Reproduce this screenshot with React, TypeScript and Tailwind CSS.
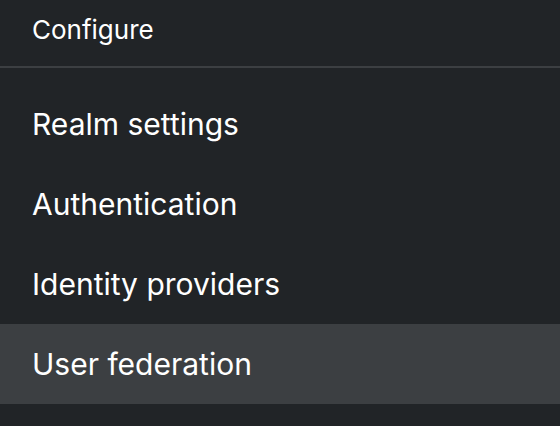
const items = ['Realm settings', 'Authentication', 'Identity providers', 'User federation']

export default function App() {
  const active = 'User federation'
  return (
    <div className="h-[426px] w-[560px] overflow-hidden bg-[#212427] text-white" style={{ fontFamily: 'Inter, "Noto Sans", sans-serif' }}>
      <div className="flex h-[66px] items-center px-8 pb-[8px] text-[26px]">Configure</div>
      <div className="h-[2px] bg-[#3c3f42]" />
      <nav className="pt-[16px]">
        {items.map((name) => (
          <div
            key={name}
            className={`flex h-[80px] items-center px-8 text-[30px] ${name === active ? 'bg-[#3c3f42]' : ''}`}
          >
            {name}
          </div>
        ))}
      </nav>
    </div>
  )
}
